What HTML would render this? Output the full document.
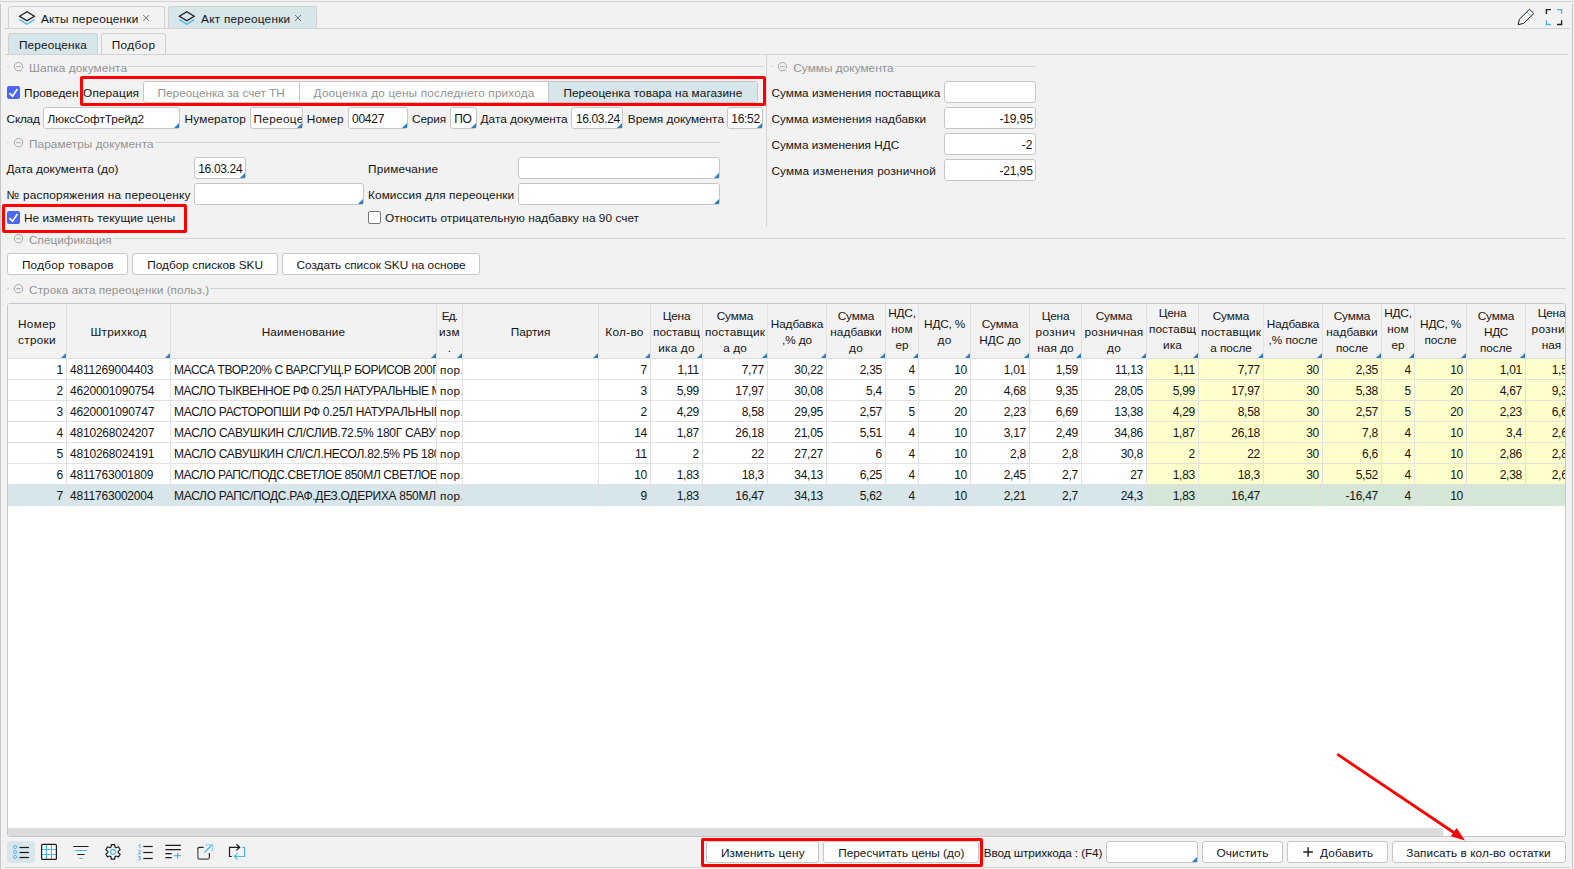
<!DOCTYPE html>
<html lang="ru">
<head>
<meta charset="utf-8">
<title>Акт переоценки</title>
<style>
html,body{margin:0;padding:0}
body{width:1574px;height:869px;position:relative;overflow:hidden;background:#f2f2f2;
 font-family:"Liberation Sans",sans-serif;font-size:12px;color:#141414}
div,span,i,svg{position:absolute;box-sizing:border-box}
.t{white-space:nowrap;line-height:16px;height:16px}
.g{color:#929292}
.ln{background:#d3d3d3}
.in{background:#fff;border:1px solid #c6c6c6;border-radius:3px}
.btn{background:#fff;border:1px solid #c6c6c6;border-radius:3px}
.tab{border:1px solid #d0d0d0;border-bottom:none;border-radius:3px 3px 0 0}
.sel{background:#d6e6ea}
.tr{width:0;height:0;border-left:5px solid transparent;border-bottom:5px solid #2e7fbf}
.cb{width:13px;height:13px;border-radius:2px;background:#4a66f2}
.cbe{width:13px;height:13px;border-radius:2px;background:#fff;border:1px solid #767676}
.red{border:3px solid #ff0000;border-radius:2px}
.cl{background:#e2e2e2;width:1px}
.rl{background:#e2e2e2;height:1px}
.y{background:#ffffcc}
.c{overflow:hidden;white-space:nowrap;line-height:16px;height:20px;padding:3px 3px 0 3px}
.r{text-align:right;letter-spacing:-0.25px}
.b{letter-spacing:-0.2px}
.h{text-align:center;line-height:16px;white-space:nowrap;font-size:11.8px}
</style>
</head>
<body>
<div class="ln" style="left:0;top:1px;width:1574px;height:1px;background:#d2d2d2"></div>
<div class="ln" style="left:0;top:4px;width:1px;height:865px;background:#c6c6c6"></div>
<div class="ln" style="left:1572px;top:4px;width:1px;height:865px;background:#c6c6c6"></div>
<div class="ln" style="left:5px;top:867px;width:1565px;height:1px"></div>
<div class="tab" style="left:8px;top:6px;width:157px;height:22px"></div>
<div class="tab sel" style="left:168px;top:6px;width:149px;height:22px"></div>
<div class="ln" style="left:4px;top:28px;width:1566px;height:1px"></div>
<span class="t" style="left:40.9px;top:11.0px;letter-spacing:0.21px;font-size:11.8px;">Акты переоценки</span>
<span class="t" style="left:201.1px;top:11.0px;letter-spacing:0.24px;font-size:11.8px;">Акт переоценки</span>
<div class="tab sel" style="left:8px;top:33px;width:90px;height:21px"></div>
<div class="tab" style="left:101px;top:33px;width:65px;height:21px"></div>
<div class="ln" style="left:5px;top:54px;width:1563px;height:1px"></div>
<span class="t" style="left:18.9px;top:37.0px;letter-spacing:0.17px;font-size:11.8px;">Переоценка</span>
<span class="t" style="left:111.8px;top:37.0px;letter-spacing:0.34px;font-size:11.8px;">Подбор</span>
<div class="ln" style="left:7px;top:66px;width:2px;height:1px"></div>
<div class="ln" style="left:128px;top:66px;width:635px;height:1px"></div>
<span class="t g" style="left:29.1px;top:60.0px;letter-spacing:0.1px;font-size:11.8px;">Шапка документа</span>
<div class="ln" style="left:771px;top:66px;width:2px;height:1px"></div>
<div class="ln" style="left:895px;top:66px;width:141px;height:1px"></div>
<span class="t g" style="left:793.3px;top:60.0px;letter-spacing:0.04px;font-size:11.8px;">Суммы документа</span>
<div class="ln" style="left:7px;top:142px;width:2px;height:1px"></div>
<div class="ln" style="left:155px;top:142px;width:565px;height:1px"></div>
<span class="t g" style="left:29.1px;top:136.0px;letter-spacing:0.04px;font-size:11.8px;">Параметры документа</span>
<div class="ln" style="left:7px;top:238px;width:2px;height:1px"></div>
<div class="ln" style="left:113px;top:238px;width:1453px;height:1px"></div>
<span class="t g" style="left:29.1px;top:232.0px;letter-spacing:-0.03px;font-size:11.8px;">Спецификация</span>
<div class="ln" style="left:7px;top:288px;width:2px;height:1px"></div>
<div class="ln" style="left:210px;top:288px;width:1356px;height:1px"></div>
<span class="t g" style="left:29.1px;top:282.0px;letter-spacing:0.04px;font-size:11.8px;">Строка акта переоценки (польз.)</span>
<div class="ln" style="left:766px;top:55px;width:1px;height:172px"></div>
<div class="cb" style="left:7px;top:86px"></div>
<span class="t" style="left:24.1px;top:85.0px;letter-spacing:0.06px;font-size:11.8px;">Проведен</span>
<span class="t" style="left:83.1px;top:85.0px;letter-spacing:0.13px;font-size:11.8px;">Операция</span>
<div class="in" style="left:143px;top:81px;width:615px;height:22px;"></div>
<div class="sel" style="left:549px;top:82px;width:208px;height:20px;border-radius:0 2px 2px 0"></div>
<div class="ln" style="left:299px;top:82px;width:1px;height:20px;background:#c6c6c6"></div>
<div class="ln" style="left:548px;top:82px;width:1px;height:20px;background:#c6c6c6"></div>
<span class="t g" style="left:157.6px;top:85.0px;letter-spacing:-0.01px;font-size:11.8px;">Переоценка за счет ТН</span>
<span class="t g" style="left:313.6px;top:85.0px;letter-spacing:0.16px;font-size:11.8px;">Дооценка до цены последнего прихода</span>
<span class="t" style="left:563.4px;top:85.0px;letter-spacing:0.06px;font-size:11.8px;">Переоценка товара на магазине</span>
<div class="red" style="left:80px;top:76px;width:686px;height:30px"></div>
<span class="t" style="left:6.6px;top:111.0px;letter-spacing:-0.23px;font-size:11.8px;">Склад</span>
<div class="in" style="left:43px;top:107px;width:137px;height:22px;"></div>
<i class="tr" style="left:174px;top:123px"></i>
<span class="t" style="left:47.6px;top:111.0px;letter-spacing:-0.07px;font-size:11.8px;">ЛюксСофтТрейд2</span>
<span class="t" style="left:184.6px;top:111.0px;letter-spacing:0.13px;font-size:11.8px;">Нумератор</span>
<div class="in" style="left:250px;top:107px;width:53px;height:22px;"></div>
<i class="tr" style="left:297px;top:123px"></i>
<span class="t" style="left:253.6px;top:111.0px;letter-spacing:0.3px;font-size:11.8px;width:48.5px;overflow:hidden;">Переоце</span>
<span class="t" style="left:306.8px;top:111.0px;letter-spacing:0.12px;font-size:11.8px;">Номер</span>
<div class="in" style="left:348px;top:107px;width:60px;height:22px;"></div>
<i class="tr" style="left:402px;top:123px"></i>
<span class="t" style="left:352.0px;top:111.0px;letter-spacing:-0.25px;">00427</span>
<span class="t" style="left:412.0px;top:111.0px;letter-spacing:-0.14px;font-size:11.8px;">Серия</span>
<div class="in" style="left:450px;top:107px;width:27px;height:22px;"></div>
<i class="tr" style="left:471px;top:123px"></i>
<span class="t" style="left:454.2px;top:111.0px;letter-spacing:-0.38px;">ПО</span>
<span class="t" style="left:480.6px;top:111.0px;letter-spacing:0.01px;font-size:11.8px;">Дата документа</span>
<div class="in" style="left:571px;top:107px;width:52px;height:22px;"></div>
<i class="tr" style="left:617px;top:123px"></i>
<span class="t" style="left:575.9px;top:111.0px;letter-spacing:-0.35px;">16.03.24</span>
<span class="t" style="left:627.8px;top:111.0px;letter-spacing:-0.01px;font-size:11.8px;">Время документа</span>
<div class="in" style="left:727px;top:107px;width:36px;height:22px;"></div>
<i class="tr" style="left:757px;top:123px"></i>
<span class="t" style="left:731.3px;top:111.0px;letter-spacing:-0.31px;">16:52</span>
<span class="t" style="left:6.6px;top:161.0px;letter-spacing:0.02px;font-size:11.8px;">Дата документа (до)</span>
<div class="in" style="left:194px;top:157px;width:52px;height:22px;"></div>
<i class="tr" style="left:240px;top:173px"></i>
<span class="t" style="left:198.2px;top:161.0px;letter-spacing:-0.33px;">16.03.24</span>
<span class="t" style="left:368.0px;top:161.0px;letter-spacing:0.21px;font-size:11.8px;">Примечание</span>
<div class="in" style="left:518px;top:157px;width:202px;height:22px;"></div>
<i class="tr" style="left:714px;top:173px"></i>
<span class="t" style="left:6.6px;top:187.0px;letter-spacing:0.22px;font-size:11.8px;">№ распоряжения на переоценку</span>
<div class="in" style="left:194px;top:183px;width:170px;height:22px;"></div>
<i class="tr" style="left:358px;top:199px"></i>
<span class="t" style="left:368.0px;top:187.0px;letter-spacing:0.11px;font-size:11.8px;">Комиссия для переоценки</span>
<div class="in" style="left:518px;top:183px;width:202px;height:22px;"></div>
<i class="tr" style="left:714px;top:199px"></i>
<div class="cb" style="left:7px;top:211px"></div>
<span class="t" style="left:23.9px;top:210.0px;letter-spacing:0.05px;font-size:11.8px;">Не изменять текущие цены</span>
<div class="red" style="left:2px;top:204px;width:185px;height:29px"></div>
<div class="cbe" style="left:368px;top:211px"></div>
<span class="t" style="left:385.1px;top:210.0px;letter-spacing:0.05px;font-size:11.8px;">Относить отрицательную надбавку на 90 счет</span>
<span class="t" style="left:771.4px;top:85.0px;letter-spacing:0.03px;font-size:11.8px;">Сумма изменения поставщика</span>
<div class="in" style="left:944px;top:81px;width:92px;height:22px;"></div>
<span class="t" style="left:771.4px;top:111.0px;letter-spacing:0.04px;font-size:11.8px;">Сумма изменения надбавки</span>
<div class="in" style="left:944px;top:107px;width:92px;height:22px;"></div>
<span class="t" style="left:999.4px;top:111.0px;letter-spacing:-0.12px;">-19,95</span>
<span class="t" style="left:771.4px;top:137.0px;font-size:11.8px;">Сумма изменения НДС</span>
<div class="in" style="left:944px;top:133px;width:92px;height:22px;"></div>
<span class="t" style="left:1021.5px;top:137.0px;letter-spacing:0.27px;">-2</span>
<span class="t" style="left:771.4px;top:163.0px;letter-spacing:0.18px;font-size:11.8px;">Сумма изменения розничной</span>
<div class="in" style="left:944px;top:159px;width:92px;height:22px;"></div>
<span class="t" style="left:999.4px;top:163.0px;letter-spacing:-0.12px;">-21,95</span>
<div class="btn" style="left:7px;top:253px;width:121px;height:22px;"></div>
<span class="t" style="left:21.9px;top:257.0px;letter-spacing:0.23px;font-size:11.8px;">Подбор товаров</span>
<div class="btn" style="left:132px;top:253px;width:146px;height:22px;"></div>
<span class="t" style="left:147.2px;top:257.0px;letter-spacing:0.03px;font-size:11.8px;">Подбор списков SKU</span>
<div class="btn" style="left:282px;top:253px;width:198px;height:22px;"></div>
<span class="t" style="left:296.6px;top:257.0px;letter-spacing:-0.04px;font-size:11.8px;">Создать список SKU на основе</span>
<div class="tbl" style="left:7px;top:303px;width:1559px;height:534px;background:#fff;border:1px solid #c6c6c6;border-radius:3px;overflow:hidden">
<div style="left:0;top:0;width:1557px;height:54px;background:#f2f2f2"></div>
<div class="rl" style="left:0;top:54px;width:1557px;background:#dedede"></div>
<div class="y" style="left:1139px;top:55px;width:418px;height:126px"></div>
<div class="sel" style="left:0;top:181px;width:1557px;height:21px"></div>
<div style="left:1139px;top:181px;width:418px;height:21px;background:#d4e6d5"></div>
<div class="rl" style="left:0;top:75px;width:1557px"></div>
<div class="rl" style="left:0;top:96px;width:1557px"></div>
<div class="rl" style="left:0;top:117px;width:1557px"></div>
<div class="rl" style="left:0;top:138px;width:1557px"></div>
<div class="rl" style="left:0;top:159px;width:1557px"></div>
<div class="rl" style="left:0;top:180px;width:1557px"></div>
<div class="cl" style="left:58px;top:0;height:202px"></div>
<div class="cl" style="left:162px;top:0;height:202px"></div>
<div class="cl" style="left:428px;top:0;height:202px"></div>
<div class="cl" style="left:454px;top:0;height:202px"></div>
<div class="cl" style="left:590px;top:0;height:202px"></div>
<div class="cl" style="left:642px;top:0;height:202px"></div>
<div class="cl" style="left:694px;top:0;height:202px"></div>
<div class="cl" style="left:759px;top:0;height:202px"></div>
<div class="cl" style="left:818px;top:0;height:202px"></div>
<div class="cl" style="left:877px;top:0;height:202px"></div>
<div class="cl" style="left:910px;top:0;height:202px"></div>
<div class="cl" style="left:962px;top:0;height:202px"></div>
<div class="cl" style="left:1021px;top:0;height:202px"></div>
<div class="cl" style="left:1073px;top:0;height:202px"></div>
<div class="cl" style="left:1138px;top:0;height:202px"></div>
<div class="cl" style="left:1190px;top:0;height:202px"></div>
<div class="cl" style="left:1255px;top:0;height:202px"></div>
<div class="cl" style="left:1314px;top:0;height:202px"></div>
<div class="cl" style="left:1373px;top:0;height:202px"></div>
<div class="cl" style="left:1406px;top:0;height:202px"></div>
<div class="cl" style="left:1458px;top:0;height:202px"></div>
<div class="cl" style="left:1517px;top:0;height:202px"></div>
<div class="h" style="left:0px;top:12px;width:58px;height:42px;overflow:hidden"><span style="position:static;letter-spacing:0.34px">Номер</span><br><span style="position:static;letter-spacing:0.3px">строки</span></div>
<i class="tr" style="left:53px;top:49px"></i>
<div class="h" style="left:59px;top:20px;width:103px;height:34px;overflow:hidden"><span style="position:static;letter-spacing:0.31px">Штрихкод</span></div>
<i class="tr" style="left:157px;top:49px"></i>
<div class="h" style="left:163px;top:20px;width:265px;height:34px;overflow:hidden"><span style="position:static;letter-spacing:0.15px">Наименование</span></div>
<i class="tr" style="left:423px;top:49px"></i>
<div class="h" style="left:429px;top:4px;width:25px;height:50px;overflow:hidden"><span style="position:static;letter-spacing:-0.88px">Ед.</span><br><span style="position:static;letter-spacing:0.3px">изм</span><br><span style="position:static;letter-spacing:0px">.</span></div>
<i class="tr" style="left:449px;top:49px"></i>
<div class="h" style="left:455px;top:20px;width:135px;height:34px;overflow:hidden"><span style="position:static;letter-spacing:-0.04px">Партия</span></div>
<i class="tr" style="left:585px;top:49px"></i>
<div class="h" style="left:591px;top:20px;width:51px;height:34px;overflow:hidden"><span style="position:static;letter-spacing:0.3px">Кол-во</span></div>
<i class="tr" style="left:637px;top:49px"></i>
<div class="h" style="left:643px;top:4px;width:51px;height:50px;overflow:hidden"><span style="position:static;letter-spacing:-0.19px">Цена</span><br><span style="position:static;letter-spacing:0.04px">поставщ</span><br><span style="position:static;letter-spacing:0.17px">ика до</span></div>
<i class="tr" style="left:689px;top:49px"></i>
<div class="h" style="left:695px;top:4px;width:64px;height:50px;overflow:hidden"><span style="position:static;letter-spacing:-0.09px">Сумма</span><br><span style="position:static;letter-spacing:0.18px">поставщик</span><br><span style="position:static;letter-spacing:0.1px">а до</span></div>
<i class="tr" style="left:754px;top:49px"></i>
<div class="h" style="left:760px;top:12px;width:58px;height:42px;overflow:hidden"><span style="position:static;letter-spacing:-0.09px">Надбавка</span><br><span style="position:static;letter-spacing:-0.12px">,% до</span></div>
<i class="tr" style="left:813px;top:49px"></i>
<div class="h" style="left:819px;top:4px;width:58px;height:50px;overflow:hidden"><span style="position:static;letter-spacing:-0.09px">Сумма</span><br><span style="position:static;letter-spacing:0.05px">надбавки</span><br><span style="position:static;letter-spacing:0.28px">до</span></div>
<i class="tr" style="left:872px;top:49px"></i>
<div class="h" style="left:878px;top:1px;width:32px;height:53px;overflow:hidden"><span style="position:static;letter-spacing:-0.2px">НДС,</span><br><span style="position:static;letter-spacing:0.1px">ном</span><br><span style="position:static;letter-spacing:-0.06px">ер</span><br><span style="position:static;letter-spacing:0.28px">до</span></div>
<i class="tr" style="left:905px;top:49px"></i>
<div class="h" style="left:911px;top:12px;width:51px;height:42px;overflow:hidden"><span style="position:static;letter-spacing:-0.2px">НДС, %</span><br><span style="position:static;letter-spacing:0.28px">до</span></div>
<i class="tr" style="left:957px;top:49px"></i>
<div class="h" style="left:963px;top:12px;width:58px;height:42px;overflow:hidden"><span style="position:static;letter-spacing:-0.09px">Сумма</span><br><span style="position:static;letter-spacing:-0.04px">НДС до</span></div>
<i class="tr" style="left:1016px;top:49px"></i>
<div class="h" style="left:1022px;top:4px;width:51px;height:50px;overflow:hidden"><span style="position:static;letter-spacing:-0.19px">Цена</span><br><span style="position:static;letter-spacing:0.38px">рознич</span><br><span style="position:static;letter-spacing:0.05px">ная до</span></div>
<i class="tr" style="left:1068px;top:49px"></i>
<div class="h" style="left:1074px;top:4px;width:64px;height:50px;overflow:hidden"><span style="position:static;letter-spacing:-0.09px">Сумма</span><br><span style="position:static;letter-spacing:0.2px">розничная</span><br><span style="position:static;letter-spacing:0.28px">до</span></div>
<i class="tr" style="left:1133px;top:49px"></i>
<div class="h" style="left:1139px;top:1px;width:51px;height:53px;overflow:hidden"><span style="position:static;letter-spacing:-0.19px">Цена</span><br><span style="position:static;letter-spacing:0.04px">поставщ</span><br><span style="position:static;letter-spacing:0.14px">ика</span><br><span style="position:static;letter-spacing:-0.08px">после</span></div>
<i class="tr" style="left:1185px;top:49px"></i>
<div class="h" style="left:1191px;top:4px;width:64px;height:50px;overflow:hidden"><span style="position:static;letter-spacing:-0.09px">Сумма</span><br><span style="position:static;letter-spacing:0.18px">поставщик</span><br><span style="position:static;letter-spacing:-0.09px">а после</span></div>
<i class="tr" style="left:1250px;top:49px"></i>
<div class="h" style="left:1256px;top:12px;width:58px;height:42px;overflow:hidden"><span style="position:static;letter-spacing:-0.09px">Надбавка</span><br><span style="position:static;letter-spacing:-0.05px">,% после</span></div>
<i class="tr" style="left:1309px;top:49px"></i>
<div class="h" style="left:1315px;top:4px;width:58px;height:50px;overflow:hidden"><span style="position:static;letter-spacing:-0.09px">Сумма</span><br><span style="position:static;letter-spacing:0.05px">надбавки</span><br><span style="position:static;letter-spacing:-0.08px">после</span></div>
<i class="tr" style="left:1368px;top:49px"></i>
<div class="h" style="left:1374px;top:1px;width:32px;height:53px;overflow:hidden"><span style="position:static;letter-spacing:-0.2px">НДС,</span><br><span style="position:static;letter-spacing:0.1px">ном</span><br><span style="position:static;letter-spacing:-0.06px">ер</span><br><span style="position:static;letter-spacing:-0.08px">после</span></div>
<i class="tr" style="left:1401px;top:49px"></i>
<div class="h" style="left:1407px;top:12px;width:51px;height:42px;overflow:hidden"><span style="position:static;letter-spacing:-0.2px">НДС, %</span><br><span style="position:static;letter-spacing:-0.08px">после</span></div>
<i class="tr" style="left:1453px;top:49px"></i>
<div class="h" style="left:1459px;top:4px;width:58px;height:50px;overflow:hidden"><span style="position:static;letter-spacing:-0.09px">Сумма</span><br><span style="position:static;letter-spacing:-0.31px">НДС</span><br><span style="position:static;letter-spacing:-0.08px">после</span></div>
<i class="tr" style="left:1512px;top:49px"></i>
<div class="h" style="left:1518px;top:1px;width:51px;height:53px;overflow:hidden"><span style="position:static;letter-spacing:-0.19px">Цена</span><br><span style="position:static;letter-spacing:0.38px">рознич</span><br><span style="position:static;letter-spacing:0px">ная</span><br><span style="position:static;letter-spacing:-0.08px">после</span></div>
<i class="tr" style="left:1564px;top:49px"></i>
<div class="c r" style="left:0px;top:55px;width:58px;">1</div>
<div class="c b" style="left:59px;top:55px;width:103px;">4811269004403</div>
<div class="c" style="left:163px;top:55px;width:265px;letter-spacing:-0.43px;padding-right:0;">МАССА ТВОР.20% С ВАР.СГУЩ.Р БОРИСОВ 200Г</div>
<div class="c" style="left:429px;top:55px;width:25px;padding-right:0;letter-spacing:0.3px;font-size:11.8px;">пор.</div>
<div class="c r" style="left:591px;top:55px;width:51px;">7</div>
<div class="c r" style="left:643px;top:55px;width:51px;">1,11</div>
<div class="c r" style="left:695px;top:55px;width:64px;">7,77</div>
<div class="c r" style="left:760px;top:55px;width:58px;">30,22</div>
<div class="c r" style="left:819px;top:55px;width:58px;">2,35</div>
<div class="c r" style="left:878px;top:55px;width:32px;">4</div>
<div class="c r" style="left:911px;top:55px;width:51px;">10</div>
<div class="c r" style="left:963px;top:55px;width:58px;">1,01</div>
<div class="c r" style="left:1022px;top:55px;width:51px;">1,59</div>
<div class="c r" style="left:1074px;top:55px;width:64px;">11,13</div>
<div class="c r" style="left:1139px;top:55px;width:51px;">1,11</div>
<div class="c r" style="left:1191px;top:55px;width:64px;">7,77</div>
<div class="c r" style="left:1256px;top:55px;width:58px;">30</div>
<div class="c r" style="left:1315px;top:55px;width:58px;">2,35</div>
<div class="c r" style="left:1374px;top:55px;width:32px;">4</div>
<div class="c r" style="left:1407px;top:55px;width:51px;">10</div>
<div class="c r" style="left:1459px;top:55px;width:58px;">1,01</div>
<div class="c r" style="left:1518px;top:55px;width:51px;">1,59</div>
<div class="c r" style="left:0px;top:76px;width:58px;">2</div>
<div class="c b" style="left:59px;top:76px;width:103px;">4620001090754</div>
<div class="c" style="left:163px;top:76px;width:265px;letter-spacing:-0.42px;padding-right:0;">МАСЛО ТЫКВЕННОЕ РФ 0.25Л НАТУРАЛЬНЫЕ МАСЛА</div>
<div class="c" style="left:429px;top:76px;width:25px;padding-right:0;letter-spacing:0.3px;font-size:11.8px;">пор.</div>
<div class="c r" style="left:591px;top:76px;width:51px;">3</div>
<div class="c r" style="left:643px;top:76px;width:51px;">5,99</div>
<div class="c r" style="left:695px;top:76px;width:64px;">17,97</div>
<div class="c r" style="left:760px;top:76px;width:58px;">30,08</div>
<div class="c r" style="left:819px;top:76px;width:58px;">5,4</div>
<div class="c r" style="left:878px;top:76px;width:32px;">5</div>
<div class="c r" style="left:911px;top:76px;width:51px;">20</div>
<div class="c r" style="left:963px;top:76px;width:58px;">4,68</div>
<div class="c r" style="left:1022px;top:76px;width:51px;">9,35</div>
<div class="c r" style="left:1074px;top:76px;width:64px;">28,05</div>
<div class="c r" style="left:1139px;top:76px;width:51px;">5,99</div>
<div class="c r" style="left:1191px;top:76px;width:64px;">17,97</div>
<div class="c r" style="left:1256px;top:76px;width:58px;">30</div>
<div class="c r" style="left:1315px;top:76px;width:58px;">5,38</div>
<div class="c r" style="left:1374px;top:76px;width:32px;">5</div>
<div class="c r" style="left:1407px;top:76px;width:51px;">20</div>
<div class="c r" style="left:1459px;top:76px;width:58px;">4,67</div>
<div class="c r" style="left:1518px;top:76px;width:51px;">9,34</div>
<div class="c r" style="left:0px;top:97px;width:58px;">3</div>
<div class="c b" style="left:59px;top:97px;width:103px;">4620001090747</div>
<div class="c" style="left:163px;top:97px;width:265px;letter-spacing:-0.3px;padding-right:0;">МАСЛО РАСТОРОПШИ РФ 0.25Л НАТУРАЛЬНЫЕ МАСЛА</div>
<div class="c" style="left:429px;top:97px;width:25px;padding-right:0;letter-spacing:0.3px;font-size:11.8px;">пор.</div>
<div class="c r" style="left:591px;top:97px;width:51px;">2</div>
<div class="c r" style="left:643px;top:97px;width:51px;">4,29</div>
<div class="c r" style="left:695px;top:97px;width:64px;">8,58</div>
<div class="c r" style="left:760px;top:97px;width:58px;">29,95</div>
<div class="c r" style="left:819px;top:97px;width:58px;">2,57</div>
<div class="c r" style="left:878px;top:97px;width:32px;">5</div>
<div class="c r" style="left:911px;top:97px;width:51px;">20</div>
<div class="c r" style="left:963px;top:97px;width:58px;">2,23</div>
<div class="c r" style="left:1022px;top:97px;width:51px;">6,69</div>
<div class="c r" style="left:1074px;top:97px;width:64px;">13,38</div>
<div class="c r" style="left:1139px;top:97px;width:51px;">4,29</div>
<div class="c r" style="left:1191px;top:97px;width:64px;">8,58</div>
<div class="c r" style="left:1256px;top:97px;width:58px;">30</div>
<div class="c r" style="left:1315px;top:97px;width:58px;">2,57</div>
<div class="c r" style="left:1374px;top:97px;width:32px;">5</div>
<div class="c r" style="left:1407px;top:97px;width:51px;">20</div>
<div class="c r" style="left:1459px;top:97px;width:58px;">2,23</div>
<div class="c r" style="left:1518px;top:97px;width:51px;">6,69</div>
<div class="c r" style="left:0px;top:118px;width:58px;">4</div>
<div class="c b" style="left:59px;top:118px;width:103px;">4810268024207</div>
<div class="c" style="left:163px;top:118px;width:265px;letter-spacing:-0.25px;padding-right:0;">МАСЛО САВУШКИН СЛ/СЛИВ.72.5% 180Г САВУШКИН</div>
<div class="c" style="left:429px;top:118px;width:25px;padding-right:0;letter-spacing:0.3px;font-size:11.8px;">пор.</div>
<div class="c r" style="left:591px;top:118px;width:51px;">14</div>
<div class="c r" style="left:643px;top:118px;width:51px;">1,87</div>
<div class="c r" style="left:695px;top:118px;width:64px;">26,18</div>
<div class="c r" style="left:760px;top:118px;width:58px;">21,05</div>
<div class="c r" style="left:819px;top:118px;width:58px;">5,51</div>
<div class="c r" style="left:878px;top:118px;width:32px;">4</div>
<div class="c r" style="left:911px;top:118px;width:51px;">10</div>
<div class="c r" style="left:963px;top:118px;width:58px;">3,17</div>
<div class="c r" style="left:1022px;top:118px;width:51px;">2,49</div>
<div class="c r" style="left:1074px;top:118px;width:64px;">34,86</div>
<div class="c r" style="left:1139px;top:118px;width:51px;">1,87</div>
<div class="c r" style="left:1191px;top:118px;width:64px;">26,18</div>
<div class="c r" style="left:1256px;top:118px;width:58px;">30</div>
<div class="c r" style="left:1315px;top:118px;width:58px;">7,8</div>
<div class="c r" style="left:1374px;top:118px;width:32px;">4</div>
<div class="c r" style="left:1407px;top:118px;width:51px;">10</div>
<div class="c r" style="left:1459px;top:118px;width:58px;">3,4</div>
<div class="c r" style="left:1518px;top:118px;width:51px;">2,67</div>
<div class="c r" style="left:0px;top:139px;width:58px;">5</div>
<div class="c b" style="left:59px;top:139px;width:103px;">4810268024191</div>
<div class="c" style="left:163px;top:139px;width:265px;letter-spacing:-0.3px;padding-right:0;">МАСЛО САВУШКИН СЛ/СЛ.НЕСОЛ.82.5% РБ 180Г</div>
<div class="c" style="left:429px;top:139px;width:25px;padding-right:0;letter-spacing:0.3px;font-size:11.8px;">пор.</div>
<div class="c r" style="left:591px;top:139px;width:51px;">11</div>
<div class="c r" style="left:643px;top:139px;width:51px;">2</div>
<div class="c r" style="left:695px;top:139px;width:64px;">22</div>
<div class="c r" style="left:760px;top:139px;width:58px;">27,27</div>
<div class="c r" style="left:819px;top:139px;width:58px;">6</div>
<div class="c r" style="left:878px;top:139px;width:32px;">4</div>
<div class="c r" style="left:911px;top:139px;width:51px;">10</div>
<div class="c r" style="left:963px;top:139px;width:58px;">2,8</div>
<div class="c r" style="left:1022px;top:139px;width:51px;">2,8</div>
<div class="c r" style="left:1074px;top:139px;width:64px;">30,8</div>
<div class="c r" style="left:1139px;top:139px;width:51px;">2</div>
<div class="c r" style="left:1191px;top:139px;width:64px;">22</div>
<div class="c r" style="left:1256px;top:139px;width:58px;">30</div>
<div class="c r" style="left:1315px;top:139px;width:58px;">6,6</div>
<div class="c r" style="left:1374px;top:139px;width:32px;">4</div>
<div class="c r" style="left:1407px;top:139px;width:51px;">10</div>
<div class="c r" style="left:1459px;top:139px;width:58px;">2,86</div>
<div class="c r" style="left:1518px;top:139px;width:51px;">2,86</div>
<div class="c r" style="left:0px;top:160px;width:58px;">6</div>
<div class="c b" style="left:59px;top:160px;width:103px;">4811763001809</div>
<div class="c" style="left:163px;top:160px;width:265px;letter-spacing:-0.41px;padding-right:0;">МАСЛО РАПС/ПОДС.СВЕТЛОЕ 850МЛ СВЕТЛОЕ</div>
<div class="c" style="left:429px;top:160px;width:25px;padding-right:0;letter-spacing:0.3px;font-size:11.8px;">пор.</div>
<div class="c r" style="left:591px;top:160px;width:51px;">10</div>
<div class="c r" style="left:643px;top:160px;width:51px;">1,83</div>
<div class="c r" style="left:695px;top:160px;width:64px;">18,3</div>
<div class="c r" style="left:760px;top:160px;width:58px;">34,13</div>
<div class="c r" style="left:819px;top:160px;width:58px;">6,25</div>
<div class="c r" style="left:878px;top:160px;width:32px;">4</div>
<div class="c r" style="left:911px;top:160px;width:51px;">10</div>
<div class="c r" style="left:963px;top:160px;width:58px;">2,45</div>
<div class="c r" style="left:1022px;top:160px;width:51px;">2,7</div>
<div class="c r" style="left:1074px;top:160px;width:64px;">27</div>
<div class="c r" style="left:1139px;top:160px;width:51px;">1,83</div>
<div class="c r" style="left:1191px;top:160px;width:64px;">18,3</div>
<div class="c r" style="left:1256px;top:160px;width:58px;">30</div>
<div class="c r" style="left:1315px;top:160px;width:58px;">5,52</div>
<div class="c r" style="left:1374px;top:160px;width:32px;">4</div>
<div class="c r" style="left:1407px;top:160px;width:51px;">10</div>
<div class="c r" style="left:1459px;top:160px;width:58px;">2,38</div>
<div class="c r" style="left:1518px;top:160px;width:51px;">2,62</div>
<div class="c r" style="left:0px;top:181px;width:58px;">7</div>
<div class="c b" style="left:59px;top:181px;width:103px;">4811763002004</div>
<div class="c" style="left:163px;top:181px;width:265px;letter-spacing:-0.3px;padding-right:0;">МАСЛО РАПС/ПОДС.РАФ.ДЕЗ.ОДЕРИХА 850МЛ</div>
<div class="c" style="left:429px;top:181px;width:25px;padding-right:0;letter-spacing:0.3px;font-size:11.8px;">пор.</div>
<div class="c r" style="left:591px;top:181px;width:51px;">9</div>
<div class="c r" style="left:643px;top:181px;width:51px;">1,83</div>
<div class="c r" style="left:695px;top:181px;width:64px;">16,47</div>
<div class="c r" style="left:760px;top:181px;width:58px;">34,13</div>
<div class="c r" style="left:819px;top:181px;width:58px;">5,62</div>
<div class="c r" style="left:878px;top:181px;width:32px;">4</div>
<div class="c r" style="left:911px;top:181px;width:51px;">10</div>
<div class="c r" style="left:963px;top:181px;width:58px;">2,21</div>
<div class="c r" style="left:1022px;top:181px;width:51px;">2,7</div>
<div class="c r" style="left:1074px;top:181px;width:64px;">24,3</div>
<div class="c r" style="left:1139px;top:181px;width:51px;">1,83</div>
<div class="c r" style="left:1191px;top:181px;width:64px;">16,47</div>
<div class="c r" style="left:1315px;top:181px;width:58px;">-16,47</div>
<div class="c r" style="left:1374px;top:181px;width:32px;">4</div>
<div class="c r" style="left:1407px;top:181px;width:51px;">10</div>
<div style="left:0;top:524px;width:1435px;height:8px;background:#dcdcdc"></div>
</div>
<div class="sel" style="left:7px;top:841px;width:28px;height:22px;border-radius:4px"></div>
<div class="btn" style="left:706px;top:841px;width:113px;height:22px;"></div>
<span class="t" style="left:720.9px;top:845.0px;letter-spacing:0.13px;font-size:11.8px;">Изменить цену</span>
<div class="btn" style="left:823px;top:841px;width:156px;height:22px;"></div>
<span class="t" style="left:838.2px;top:845.0px;letter-spacing:0.02px;font-size:11.8px;">Пересчитать цены (до)</span>
<div class="red" style="left:701px;top:838px;width:282px;height:29px"></div>
<span class="t" style="left:983.8px;top:845.0px;letter-spacing:-0.11px;font-size:11.8px;">Ввод штрихкода : (F4)</span>
<div class="in" style="left:1106px;top:841px;width:92px;height:22px;"></div>
<i class="tr" style="left:1192px;top:857px"></i>
<div class="btn" style="left:1202px;top:841px;width:81px;height:22px;"></div>
<span class="t" style="left:1216.6px;top:845.0px;letter-spacing:0.06px;font-size:11.8px;">Очистить</span>
<div class="btn" style="left:1287px;top:841px;width:101px;height:22px;"></div>
<span class="t" style="left:1320.0px;top:845.0px;letter-spacing:0.15px;font-size:11.8px;">Добавить</span>
<div class="btn" style="left:1392px;top:841px;width:174px;height:22px;"></div>
<span class="t" style="left:1406.2px;top:845.0px;letter-spacing:0.07px;font-size:11.8px;">Записать в кол-во остатки</span>
<svg width="1574" height="869" viewBox="0 0 1574 869" style="left:0;top:0;pointer-events:none"><g stroke="#a6a6a6" stroke-width="1" fill="none"><circle cx="18.5" cy="66.7" r="4.2"/><path d="M16.2 66.7h4.7"/></g><g stroke="#a6a6a6" stroke-width="1" fill="none"><circle cx="782.5" cy="66.7" r="4.2"/><path d="M780.2 66.7h4.7"/></g><g stroke="#a6a6a6" stroke-width="1" fill="none"><circle cx="18.5" cy="142.7" r="4.2"/><path d="M16.2 142.7h4.7"/></g><g stroke="#a6a6a6" stroke-width="1" fill="none"><circle cx="18.5" cy="238.7" r="4.2"/><path d="M16.2 238.7h4.7"/></g><g stroke="#a6a6a6" stroke-width="1" fill="none"><circle cx="18.5" cy="288.7" r="4.2"/><path d="M16.2 288.7h4.7"/></g><path d="M9.4 93.2l3.1 3l4.9 -7.2" stroke="#fff" stroke-width="1.7" fill="none"/><path d="M9.4 218.2l3.1 3l4.9 -7.2" stroke="#fff" stroke-width="1.7" fill="none"/><path d="M19.6 16.2l7.4 -4.5l7.4 4.5l-7.4 4.5z" stroke="#1c1c1c" stroke-width="1.3" fill="none" stroke-linejoin="miter"/><path d="M19.6 19.6l7.4 4.6l7.4 -4.6" stroke="#4db5ee" stroke-width="1.3" fill="none"/><path d="M143.2 15l6 6M149.2 15l-6 6" stroke="#6e6e6e" stroke-width="1" fill="none"/><path d="M179.4 16.2l7.4 -4.5l7.4 4.5l-7.4 4.5z" stroke="#1c1c1c" stroke-width="1.3" fill="none" stroke-linejoin="miter"/><path d="M179.4 19.6l7.4 4.6l7.4 -4.6" stroke="#4db5ee" stroke-width="1.3" fill="none"/><path d="M295 15l6 6M301 15l-6 6" stroke="#6e6e6e" stroke-width="1" fill="none"/><path d="M1529.5 9.3l4.3 4.2l-10.3 9.9l-5.4 1.3l1.3 -5.5z" stroke="#1c1c1c" stroke-width="1.0" fill="none" stroke-linejoin="miter"/><path d="M1527 12l4.3 3.8" stroke="#4db5ee" stroke-width="0.9"/><path d="M1546.4 14v-4.4h4.6M1561.6 20.2v4.3h-4.6" stroke="#1c1c1c" stroke-width="1.3" fill="none"/><path d="M1557 9.6h4.6v4.4M1551 24.5h-4.6v-4.3" stroke="#4db5ee" stroke-width="1.3" fill="none"/><circle cx="15" cy="847" r="1.6" stroke="#4db5ee" stroke-width="0.9" fill="none"/><path d="M19.5 847.5h9.5" stroke="#1c1c1c" stroke-width="1.2"/><circle cx="15" cy="852" r="1.6" stroke="#4db5ee" stroke-width="0.9" fill="none"/><path d="M19.5 852.5h9.5" stroke="#1c1c1c" stroke-width="1.2"/><circle cx="15" cy="857" r="1.6" stroke="#4db5ee" stroke-width="0.9" fill="none"/><path d="M19.5 857.5h9.5" stroke="#1c1c1c" stroke-width="1.2"/><rect x="41" y="843.8" width="16" height="16.2" rx="1.5" fill="#fafafa"/><path d="M46.5 844.5v15M51.5 844.5v15M41.5 849.5h15M41.5 854.5h15" stroke="#4db5ee" stroke-width="1.1" fill="none"/><rect x="41.6" y="844.4" width="14.8" height="15" rx="1" stroke="#1c1c1c" stroke-width="1.2" fill="none"/><path d="M73.3 846.5h15.3M77.3 854.5h7.3" stroke="#1c1c1c" stroke-width="1.2"/><path d="M75.3 850.5h11.5M79.3 858.5h3.3" stroke="#4db5ee" stroke-width="1.2"/><path d="M111.33 844.59L114.67 844.59L114.95 846.97L116.29 847.75L118.49 846.79L120.17 849.69L118.24 851.13L118.24 852.67L120.17 854.11L118.49 857.01L116.29 856.05L114.95 856.83L114.67 859.21L111.33 859.21L111.05 856.83L109.71 856.05L107.51 857.01L105.83 854.11L107.76 852.67L107.76 851.13L105.83 849.69L107.51 846.79L109.71 847.75L111.05 846.97z" stroke="#1c1c1c" stroke-width="1.2" fill="none" stroke-linejoin="round"/><circle cx="113" cy="851.9" r="2.4" stroke="#62bcee" stroke-width="1.3" fill="none"/><path d="M143.3 846.5h9.4" stroke="#1c1c1c" stroke-width="1.2"/><path d="M143.3 852.5h9.4" stroke="#1c1c1c" stroke-width="1.2"/><path d="M143.3 858.5h9.4" stroke="#1c1c1c" stroke-width="1.2"/><path d="M138.5 845.4l1.4 -0.9v3.7M138.2 851.3q0.1 -0.9 1.2 -0.9q1.2 0 1.2 1q0 0.7 -2.4 2.5h2.7M138.2 856.6h2.3l-1.3 1.4q1.5 0.1 1.5 1q0 1 -1.4 1q-0.8 0 -1.2 -0.4" stroke="#4db5ee" stroke-width="1" fill="none"/><path d="M165.4 845.4h15.4M165.4 849.6h15.4M165.4 853.6h6.3M165.4 857.6h6.3" stroke="#1c1c1c" stroke-width="1.2"/><path d="M174.4 855.6h6.4M177.6 852.4v6.4" stroke="#4db5ee" stroke-width="1.2"/><path d="M197.8 848.6v8.9q0 1.6 1.6 1.6h8.4q1.6 0 1.6 -1.6" stroke="#777" stroke-width="1.6" fill="none"/><path d="M203.7 847.4h-4.4q-1.5 0 -1.5 1.5M209.4 857.8v-4.7" stroke="#2a2a2a" stroke-width="1.2" fill="none"/><path d="M204.3 852.5l7.9 -7.7" stroke="#4db5ee" stroke-width="1.2" fill="none"/><path d="M205.4 844.8h7v6.4" stroke="#8fd0f3" stroke-width="1.2" fill="none"/><path d="M231.8 856.5h-2.3v-9.2h10M236.4 844.2l3.3 3.1l-3.3 3.1" stroke="#1c1c1c" stroke-width="1.2" fill="none"/><path d="M242.4 847.3h2.2v9.2h-10M237.7 853.4l-3.3 3.1l3.3 3.1" stroke="#4db5ee" stroke-width="1.2" fill="none"/><path d="M1303.3 852h9.6M1308.1 847.2v9.6" stroke="#1c1c1c" stroke-width="1.4"/><path d="M1337.2 754.2L1456 834" stroke="#ff0000" stroke-width="2.8" stroke-linecap="butt"/><path d="M1465 840.6L1450.9 836.3L1456.6 827.9z" fill="#ff0000"/></svg>
</body>
</html>
